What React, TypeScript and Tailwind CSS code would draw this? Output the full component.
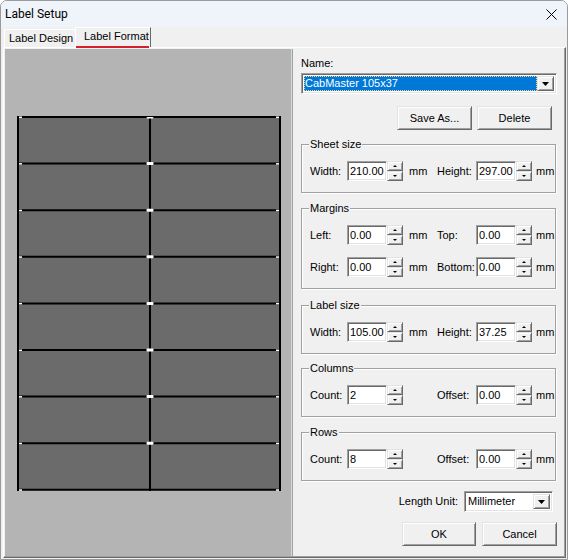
import React from 'react';

const sunken =
  'border border-t-[#a0a0a0] border-l-[#a0a0a0] border-r-white border-b-white shadow-[inset_1px_1px_0_#696969,inset_-1px_-1px_0_#e3e3e3] bg-white';
const raised =
  'border border-t-[#e3e3e3] border-l-[#e3e3e3] border-r-[#696969] border-b-[#696969] shadow-[inset_1px_1px_0_#ffffff,inset_-1px_-1px_0_#a0a0a0] bg-[#f0f0f0]';

function Arrow({ up, w = 5, h = 3 }: { up?: boolean; w?: number; h?: number }) {
  return (
    <svg width={w} height={h} viewBox={`0 0 ${w} ${h}`}>
      <polygon points={up ? `0,${h} ${w / 2},0 ${w},${h}` : `0,0 ${w},0 ${w / 2},${h}`} fill="#000" />
    </svg>
  );
}

function Spin() {
  return (
    <div className="flex flex-col w-[16px] h-[20px]">
      <div className={`${raised} h-[10px] flex items-center justify-center`}>
        <Arrow up w={4} h={2} />
      </div>
      <div className={`${raised} h-[10px] flex items-center justify-center`}>
        <Arrow w={4} h={2} />
      </div>
    </div>
  );
}

function Field({ value }: { value: string }) {
  return (
    <div className={`${sunken} w-[40px] h-[20px] pl-[2px] leading-[18px]`}>{value}</div>
  );
}

function DropButton() {
  return (
    <div className={`${raised} w-[17px] h-full flex items-center justify-center`}>
      <Arrow w={7} h={4} />
    </div>
  );
}

function Group({ title, className = '', children }: { title: string; className?: string; children: React.ReactNode }) {
  return (
    <div className={`relative border border-[#a0a0a0] shadow-[inset_1px_1px_0_#ffffff,1px_1px_0_#ffffff] pl-[8px] pt-[16px] ${className}`}>
      <span className="absolute left-[7px] -top-[7px] px-[1px] bg-[#f0f0f0] leading-[13px]">{title}</span>
      {children}
    </div>
  );
}

function Row({ a, av, b, bv, mmA = true }: { a: string; av: string; b: string; bv: string; mmA?: boolean }) {
  return (
    <div className="flex items-center h-[20px]">
      <span className="w-[37px]">{a}</span>
      <Field value={av} />
      <Spin />
      <span className="w-[34px] pl-[6px]">{mmA ? 'mm' : ''}</span>
      <span className="w-[39px]">{b}</span>
      <Field value={bv} />
      <Spin />
      <span className="pl-[4px]">mm</span>
    </div>
  );
}

function Sheet() {
  const rows = Array.from({ length: 9 }, (_, k) => 1 + k * 46.6);
  const xs = [1, 133, 263];
  return (
    <svg width="264" height="375" viewBox="0 0 264 375" className="ml-[12px] mt-[67px]">
      <rect x="1" y="1" width="262" height="373" fill="#6b6b6b" />
      {xs.map((x) => (
        <line key={x} x1={x} y1="0" x2={x} y2="375" stroke="#000" strokeWidth="2" />
      ))}
      {rows.map((y) => (
        <line key={y} x1="0" y1={y} x2="264" y2={y} stroke="#000" strokeWidth="2" />
      ))}
      {rows.map((y, i) => (
        <g key={'m' + y} fill="#fff">
          <rect x="2" y={y - 0.5} width="3" height="1.5" />
          <rect x="259" y={y - 0.5} width="3" height="1.5" />
          {i < 8 && (
            <rect x="129.5" y={i === 0 ? y : y - 1.5} width="7" height={i === 0 ? 1.5 : 3} rx="1" />
          )}
        </g>
      ))}
    </svg>
  );
}

export default function App() {
  return (
    <div className="w-[568px] h-[560px] flex flex-col bg-[#f0f0f0] border border-[#9a9a9a] rounded-t-[7px] overflow-hidden font-['Liberation_Sans',Arial,sans-serif] text-[11px] text-black">
      {/* title bar */}
      <div className="h-[26px] shrink-0 bg-[#eef4f9] flex items-center justify-between pl-[4px] pr-[10px]">
        <span className="font-['Roboto',sans-serif] text-[12px]">Label Setup</span>
        <svg width="11" height="11" viewBox="0 0 11 11">
          <path d="M0.5 0.5 L10.5 10.5 M10.5 0.5 L0.5 10.5" stroke="#000" strokeWidth="1" />
        </svg>
      </div>

      {/* tabs */}
      <div className="h-[20px] shrink-0 flex items-end pl-[3px]">
        <div className="h-[18px] w-[71px] border-t border-l border-white pl-[4px] leading-[17px]">Label Design</div>
        <div className="relative h-[20px] w-[76px] border-t border-l border-white border-r border-r-[#696969] pl-[8px] leading-[17px]">
          Label Format
          <div className="absolute left-0 right-[1px] -bottom-[1px] h-[2px] bg-[#d4202c]" />
        </div>
      </div>

      {/* tab page */}
      <div className="flex-1 ml-[2px] mr-[1px] mb-[1px] flex p-[1px] border border-t-white border-l-white border-r-[#696969] border-b-[#696969] shadow-[inset_-1px_-1px_0_#a0a0a0]">
        <div className="w-[288px] bg-[#b4b4b4] border-r border-[#d8d8d8]">
          <Sheet />
        </div>

        <div className="flex-1 flex flex-col border-l border-[#a0a0a0] pl-[8px] pr-[7px] pt-[8px]">
          <span className="leading-[13px]">Name:</span>
          <div className={`${sunken} mt-[3px] h-[21px] w-[256px] flex p-[2px]`}>
            <div className="flex-1 bg-[#0078d7] text-white pl-[1px] leading-[15px] outline-1 outline-dotted outline-[#ffd27a] -outline-offset-1">
              CabMaster 105x37
            </div>
            <DropButton />
          </div>

          <div className="mt-[12px] flex justify-end gap-[5px] pr-[5px]">
            <button className={`${raised} w-[75px] h-[24px]`}>Save As...</button>
            <button className={`${raised} w-[75px] h-[24px]`}>Delete</button>
          </div>

          <Group title="Sheet size" className="mt-[14px] h-[49px] w-[255px]">
            <Row a="Width:" av="210.00" b="Height:" bv="297.00" />
          </Group>

          <Group title="Margins" className="mt-[15px] h-[81px] w-[255px]">
            <div className="flex flex-col gap-[12px]">
              <Row a="Left:" av="0.00" b="Top:" bv="0.00" />
              <Row a="Right:" av="0.00" b="Bottom:" bv="0.00" />
            </div>
          </Group>

          <Group title="Label size" className="mt-[16px] h-[49px] w-[255px]">
            <Row a="Width:" av="105.00" b="Height:" bv="37.25" />
          </Group>

          <Group title="Columns" className="mt-[14px] h-[49px] w-[255px]">
            <Row a="Count:" av="2" b="Offset:" bv="0.00" mmA={false} />
          </Group>

          <Group title="Rows" className="mt-[15px] h-[49px] w-[255px]">
            <Row a="Count:" av="8" b="Offset:" bv="0.00" mmA={false} />
          </Group>

          <div className="mt-[10px] flex items-center justify-end pr-[4px] gap-[6px]">
            <span>Length Unit:</span>
            <div className={`${sunken} w-[89px] h-[21px] flex p-[2px]`}>
              <div className="flex-1 pl-[1px] leading-[15px]">Millimeter</div>
              <DropButton />
            </div>
          </div>

          <div className="mt-[10px] flex justify-end gap-[6px]">
            <button className={`${raised} w-[74px] h-[24px]`}>OK</button>
            <button className={`${raised} w-[75px] h-[24px]`}>Cancel</button>
          </div>
        </div>
      </div>
    </div>
  );
}
